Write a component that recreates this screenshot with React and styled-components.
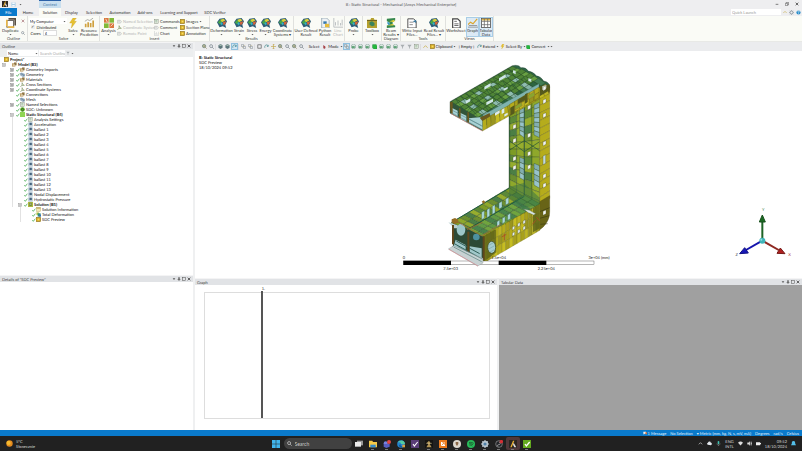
import React from "react";
import styled, { createGlobalStyle } from "styled-components";

const GlobalStyle = createGlobalStyle`
  * {
    box-sizing: border-box;
  }
  body {
    margin: 0;
    font-family: Lato, "Liberation Sans", Arial, sans-serif;
    font-size: 4px;
    line-height: 5px;
    color: #222;
    text-rendering: geometricPrecision;
  }
  button, input, select {
    font: inherit;
    color: inherit;
    margin: 0;
    padding: 0;
    border: none;
    background: transparent;
  }
  svg {
    display: block;
    flex: none;
  }
`;

const App = styled.div`
  display: flex;
  flex-direction: column;
  height: 100vh;
  overflow: hidden;
  background: #fff;
  white-space: nowrap;
`;

// title and tabs
const Header = styled.header`
  background: #eeeef0;
`;
const TitleBar = styled.div`
  display: grid;
  grid-template-columns: 1fr auto 1fr;
  align-items: center;
  height: 8px;
`;
const QuickAccess = styled.div`
  display: flex;
  align-items: center;
  height: 8px;
  gap: 3px;
  padding-left: 2px;
`;
const ContextTab = styled.span`
  width: 22px;
  height: 8px;
  margin-left: 14px;
  padding-top: 1px;
  border-top: 1px solid #2b62a8;
  background: #c9dfef;
  color: #4a7ba8;
  text-align: center;
`;
const Title = styled.span`
  color: #555;
`;
const WindowButtons = styled.div`
  display: flex;
  justify-content: flex-end;
  gap: 6px;
  padding-right: 3px;
`;
const TabRow = styled.div`
  display: flex;
  align-items: center;
  height: 8px;
`;
const Tab = styled.button`
  width: ${(p) => p.$w}px;
  height: 8px;
  text-align: center;
  background: ${(p) => (p.$file ? "#0a7acb" : p.$active ? "#fafbf6" : "transparent")};
  color: ${(p) => (p.$file ? "#fff" : "#333")};
`;
const LaunchBox = styled.input`
  width: 50px;
  height: 6px;
  margin-left: auto;
  margin-right: 2px;
  padding-left: 1px;
  background: #fff;
  &::placeholder {
    color: #999;
  }
`;
const HelpIcons = styled.div`
  display: flex;
  gap: 2px;
  padding-right: 1px;
`;

// ribbon
const Ribbon = styled.div`
  display: flex;
  height: 26px;
  background: #fafbf6;
  border-bottom: 1px solid #e8e9e6;
`;
const Group = styled.section`
  display: flex;
  flex-direction: column;
  width: ${(p) => p.$w}px;
  padding-top: 1px;
  border-right: 1px solid #e0e1de;
`;
const GroupBody = styled.div`
  display: flex;
  flex: none;
  justify-content: center;
  height: 19px;
`;
const GroupName = styled.div`
  height: 5px;
  text-align: center;
  color: #444;
`;
const ToolButton = styled.button`
  display: flex;
  flex-direction: column;
  align-items: center;
  flex: none;
  width: ${(p) => p.$w}px;
  height: 20px;
  padding-top: 1px;
  line-height: 4px;
  color: ${(p) => (p.$dim ? "#b5b5b5" : "#333")};
  background: ${(p) => (p.$active ? "#dceaf5" : "transparent")};
  outline: ${(p) => (p.$active ? "1px solid #a9cde6" : "none")};
  outline-offset: -1px;
  svg {
    margin-bottom: 1px;
  }
`;
const Stack = styled.div`
  display: flex;
  flex-direction: column;
  width: ${(p) => p.$w}px;
  padding-top: 1px;
`;
const SmallTool = styled.button`
  display: flex;
  align-items: center;
  gap: 1px;
  height: 6px;
  color: ${(p) => (p.$dim ? "#b5b5b5" : "#333")};
`;
const Line = styled.label`
  display: flex;
  align-items: center;
  gap: 2px;
  height: 6px;
  padding-left: 2px;
`;
const Picker = styled.select`
  width: ${(p) => p.$w}px;
  height: 6px;
  padding-left: 1px;
  appearance: none;
  background: #fff;
`;
const PickerWrap = styled.span`
  display: flex;
  align-items: center;
  background: #fff;
`;
const Tick = styled.input`
  appearance: none;
  width: 4px;
  height: 4px;
  background: #eee;
  &:checked::before {
    content: "✓";
    display: block;
    line-height: 4px;
  }
`;
const CoresBox = styled.input`
  width: 14px;
  height: 6px;
  padding-left: 1px;
  border: 1px solid #ddd;
  background: #fff;
`;

// work area
const Work = styled.main`
  display: grid;
  grid-template-columns: 193px 1fr;
  gap: 2px;
  flex: 1;
  min-height: 0;
  background: #eff0f1;
`;
const Column = styled.div`
  display: flex;
  flex-direction: column;
  min-width: 0;
  min-height: 0;
`;
const Panel = styled.section`
  display: flex;
  flex-direction: column;
  flex: ${(p) => (p.$h ? "none" : "1")};
  height: ${(p) => (p.$h ? p.$h + "px" : "auto")};
  min-height: 0;
  min-width: 0;
  background: ${(p) => p.$bg || "#fff"};
`;
const PanelHead = styled.div`
  display: flex;
  align-items: center;
  flex: none;
  height: 7px;
  padding: 0 2px;
  gap: 1px;
  border-top: 1px solid #f4f4f5;
  background: #e1e3e6;
  color: #444;
`;
const Spacer = styled.span`
  flex: 1;
`;
const SearchRow = styled.div`
  display: flex;
  align-items: center;
  flex: none;
  height: 8px;
  padding-left: 7px;
  gap: 1px;
  background: #eceeef;
`;
const OutlineSearch = styled.input`
  width: 26px;
  height: 6px;
  padding-left: 1px;
  background: #fff;
  &::placeholder {
    color: #aaa;
  }
`;

// outline tree
const Tree = styled.ul`
  margin: 0;
  padding: 0 0 0 1px;
  list-style: none;
`;
const TreeRow = styled.li`
  display: flex;
  align-items: center;
  height: 5px;
  color: #111;
  font-weight: ${(p) => (p.$bold ? 700 : 400)};
`;
const Guide = styled.span`
  width: 5px;
  height: 5px;
  margin-left: 3px;
  border-left: 1px solid ${(p) => (p.$on ? "#e2e2e2" : "transparent")};
`;
const Branch = styled.span`
  display: flex;
  align-items: center;
  justify-content: space-between;
  width: ${(p) => (p.$root ? 3 : 11)}px;
  height: 5px;
  padding-left: 1px;
`;
const NodeName = styled.span`
  margin-left: 1px;
`;

// graphics toolbar
const Toolbar = styled.div`
  display: flex;
  align-items: center;
  flex: none;
  height: 9px;
  padding-left: 6px;
  background: #ebecee;
`;
const ToolIcon = styled.button`
  display: flex;
  align-items: center;
  justify-content: center;
  flex: none;
  width: 7px;
  height: 7px;
  background: ${(p) => (p.$active ? "#cfe4f2" : "transparent")};
  outline: ${(p) => (p.$active ? "1px solid #8fc0de" : "none")};
  outline-offset: -1px;
`;
const Gap = styled.span`
  width: 2px;
  height: 6px;
  border-left: 1px solid #dcdddf;
`;
const ToolText = styled.button`
  display: flex;
  align-items: center;
  justify-content: center;
  gap: 1px;
  flex: none;
  width: ${(p) => p.$w}px;
`;

// viewport
const View = styled.div`
  position: relative;
  display: flex;
  align-items: center;
  justify-content: center;
  flex: 1;
  min-height: 0;
  background: #fff;
`;
const Caption = styled.div`
  position: absolute;
  left: 4px;
  top: 4px;
  line-height: 5px;
  color: #111;
`;
const TriadWrap = styled.div`
  position: absolute;
  right: 0;
  bottom: 0;
`;
const Bottom = styled.div`
  display: grid;
  grid-template-columns: 302px 1fr;
  gap: 2px;
  flex: none;
  height: 152px;
`;
const Plot = styled.div`
  position: relative;
  flex: 1;
  margin: 7px 7px 11px 9px;
  border: 1px solid #ddd;
`;
const TimeMark = styled.div`
  position: absolute;
  left: 20%;
  top: -7px;
  bottom: 0;
  &::after {
    content: "";
    position: absolute;
    left: -1px;
    top: 5px;
    bottom: 0;
    width: 2px;
    background: #555;
  }
`;
const MarkName = styled.span`
  display: block;
`;

// bottom bars
const StatusBar = styled.footer`
  display: flex;
  align-items: center;
  justify-content: flex-end;
  flex: none;
  height: 6px;
  padding-right: 3px;
  gap: 4px;
  color: #e3f2fc;
  background: #0a7acb;
`;
const StatusItem = styled.span`
  display: flex;
  align-items: center;
  gap: 1px;
`;
const Taskbar = styled.nav`
  display: grid;
  grid-template-columns: 1fr auto 1fr;
  align-items: center;
  flex: none;
  height: 15px;
  color: #ddd;
  background: #212121;
`;
const Weather = styled.div`
  display: flex;
  align-items: center;
  gap: 3px;
  padding-left: 6px;
`;
const Dock = styled.div`
  display: flex;
  align-items: center;
`;
const DockButton = styled.button`
  display: flex;
  align-items: center;
  justify-content: center;
  width: 14px;
  height: 13px;
  border-radius: 2px;
  background: ${(p) => (p.$active ? "#50383a" : "transparent")};
`;
const DockMark = styled.span`
  display: flex;
  flex-direction: column;
  align-items: center;
  gap: 1px;
  padding-top: 2px;
  &::after {
    content: "";
    width: 3px;
    height: 1px;
    background: ${(p) => (p.$open ? "#777" : "transparent")};
  }
`;
const DockSearch = styled.label`
  display: flex;
  align-items: center;
  gap: 3px;
  width: 68px;
  height: 11px;
  margin-left: 1px;
  padding-left: 3px;
  border-radius: 6px;
  background: #414141;
`;
const DockInput = styled.input`
  width: 50px;
  font-size: 5px;
  &::placeholder {
    color: #ccc;
  }
`;
const Tray = styled.div`
  display: flex;
  align-items: center;
  justify-content: flex-end;
  gap: 4px;
  padding-right: 6px;
`;
const TwoLines = styled.div`
  line-height: 5px;
  text-align: ${(p) => p.$align || "left"};
`;

const shapes = {
  ansys: (
    <>
      <rect width="12" height="12" fill="#2b2622" />
      <path d="M2 11L6 1h2L4 11z" fill="#f2b632" />
      <path d="M7 4l4 7H8L6 7z" fill="#ddd" />
    </>
  ),
  save: (
    <>
      <rect x="1" y="1" width="10" height="10" fill="#a9cce5" />
      <path d="M3 1h6v4H3zM3 7h6v4H3z" fill="#f5fafd" />
    </>
  ),
  minus: <path d="M2 7h8" stroke="#444" strokeWidth="2" />,
  restore: <path d="M4 4V1h7v7H8M1 4h7v7H1z" fill="none" stroke="#444" strokeWidth="1.5" />,
  cross: <path d="M2 2l8 8M10 2l-8 8" stroke="#444" strokeWidth="2.4" />,
  redCross: <path d="M2 2l8 8M10 2l-8 8" stroke="#a46a70" strokeWidth="2" />,
  square: <rect x="2" y="2" width="8" height="8" fill="none" stroke="#555" strokeWidth="1.6" />,
  pin: <path d="M4 1h4v5h2v2H7v4H5V8H2V6h2z" fill="#555" />,
  down: <path d="M2 4h8l-4 5z" fill="#555" />,
  up: <path d="M2 8l4-4 4 4" fill="none" stroke="#ddd" strokeWidth="1.6" />,
  caret: <path d="M1 9l5-5 5 5" fill="none" stroke="#cbb355" strokeWidth="2" />,
  gear: (
    <>
      <circle cx="6" cy="6" r="3.6" fill="none" stroke="#8e99a0" strokeWidth="2.4" />
      <path d="M6 0v2M6 10v2M0 6h2M10 6h2M2 2l1 1M9 9l1 1M10 2L9 3M2 10l1-1" stroke="#8e99a0" strokeWidth="1.6" />
    </>
  ),
  settings: (
    <>
      <circle cx="6" cy="6" r="3.6" fill="#4f7fa6" stroke="#b7c4cd" strokeWidth="2.4" />
      <path d="M6 0v2M6 10v2M0 6h2M10 6h2M2 2l1 1M9 9l1 1M10 2L9 3M2 10l1-1" stroke="#b7c4cd" strokeWidth="1.6" />
    </>
  ),
  help: (
    <>
      <circle cx="6" cy="6" r="5" fill="#258bc9" />
      <path d="M4 5c0-3 4-3 4-1 0 1-2 1-2 3M6 8v2" fill="none" stroke="#fff" strokeWidth="1.3" />
    </>
  ),
  duplicate: (
    <>
      <path d="M3 0h9v9h-2V2H3z" fill="#594f42" />
      <rect x="1" y="3" width="8" height="8" fill="#fff" stroke="#55504a" strokeWidth="1" />
      <path d="M0 2v10h2V2zM0 10h10v2H0z" fill="#e8b647" />
    </>
  ),
  zoom: (
    <>
      <circle cx="5" cy="5" r="3.4" fill="#f4f8f8" stroke="#68737b" strokeWidth="1.6" />
      <path d="M8 8l3 3" stroke="#68737b" strokeWidth="2" />
    </>
  ),
  search: (
    <>
      <circle cx="5" cy="5" r="3.6" fill="none" stroke="#ddd" strokeWidth="1.6" />
      <path d="M8 8l3 3" stroke="#ddd" strokeWidth="1.8" />
    </>
  ),
  zoomIn: (
    <>
      <circle cx="5" cy="5" r="4" fill="#dcebd6" stroke="#5d7360" strokeWidth="1.6" />
      <path d="M3 5h4M5 3v4M8 8l3 3" stroke="#78643a" strokeWidth="1.5" />
    </>
  ),
  bolt: <path d="M6 0h4L7 4h3L4 12l1-6H2z" fill="#e7c232" stroke="#c29c1f" strokeWidth=".4" />,
  bars: (
    <>
      <path d="M1 11V7h2v4zM4 11V5h2v6zM7 11V6h2v5zM10 11V3h2v8z" fill="#d0a13f" />
      <path d="M1 4l3-2 3 1 4-3" fill="none" stroke="#8b8b87" strokeWidth=".8" />
    </>
  ),
  analysis: (
    <>
      <path d="M0 0h6v6H0zM6 6h6v6H6z" fill="#d97840" />
      <path d="M6 0h6v6H6zM0 6h6v6H0z" fill="#82b93a" />
      <path d="M2 1l2 4M8 10l3-3M0 6h12M6 0v12" stroke="#fff" strokeWidth=".8" />
    </>
  ),
  mesh: (
    <>
      <path d="M0 5l3-4 6-1 3 4-2 4 1 4-4-2-4 1z" fill="#2d5d79" />
      <path d="M1 5l3-3 2 2-2 4z" fill="#47a647" />
      <path d="M4 2l4-1 2 2-4 2z" fill="#dcd039" />
      <path d="M7 5l4-1-1 3-2 2z" fill="#d66237" />
      <path d="M5 5l2 1-1 3-2-2z" fill="#34b1c4" />
    </>
  ),
  python: (
    <>
      <path d="M2 0h6l3 3v9H2z" fill="#eef2f5" stroke="#8195a3" strokeWidth=".8" />
      <path d="M4 4h4v3H4z" fill="#3879ae" />
      <path d="M6 7h5v4H6z" fill="#e8bd3c" />
    </>
  ),
  chart: <path d="M1 0v11h11M3 9V5M6 9V3M9 9V6M11 9V2" fill="none" stroke="#b9bdc0" strokeWidth="1.1" />,
  toolbox: (
    <>
      <path d="M0 2h4l1-2h3l1 2h3v10H0z" fill="#b5a02f" />
      <path d="M3 5l3-1 3 2v3l-3 1-3-2z" fill="#39845e" />
      <path d="M0 3h12" stroke="#64591c" strokeWidth="1" />
    </>
  ),
  beam: (
    <>
      <path d="M1 1l10-1v3L8 4v4l3 1v2L1 12V9l3-1V5L1 4z" fill="#34864d" />
      <path d="M4 4l6-2v3zM1 9l8-2v2z" fill="#ddcd38" />
      <path d="M2 5l2 3" stroke="#3497c4" strokeWidth="2" />
    </>
  ),
  file: (
    <>
      <path d="M1 1h7l3 3v8H1z" fill="#fff" stroke="#555" strokeWidth="1.2" />
      <path d="M3 5h5M3 8h4" stroke="#777" />
      <path d="M7 4l4-2v4z" fill="#3b799e" />
    </>
  ),
  sheet: (
    <>
      <path d="M2 1h6l3 3v8H2z" fill="#fff" stroke="#444" strokeWidth="1.4" />
      <path d="M4 4h3M4 7h5M4 9h5" stroke="#555" />
    </>
  ),
  info: (
    <>
      <rect x="1" y="1" width="10" height="10" fill="#f1e9b8" stroke="#b7a660" />
      <path d="M1 1h10v3H1z" fill="#c4a95a" />
    </>
  ),
  graph: (
    <>
      <path d="M0 8l3-3 3 2 5-6" fill="none" stroke="#dca52c" strokeWidth="1.4" />
      <path d="M0 11h12M1 9h10" stroke="#777" strokeWidth=".8" />
    </>
  ),
  table: (
    <>
      <rect x="0.5" y="0.5" width="11" height="11" fill="#fff" stroke="#555" />
      <path d="M1 1h10v2H1z" fill="#e1b545" />
      <path d="M1 4h10M1 8h10M4 1v10M8 1v10" stroke="#666" strokeWidth=".9" />
    </>
  ),
  tag: (
    <>
      <path d="M1 3h7l3 3-3 4H1z" fill="#e8ebe9" stroke="#a5aaa7" strokeWidth="1" />
      <path d="M3 5h4" stroke="#aaa" />
    </>
  ),
  doc: (
    <>
      <rect x="1" y="1" width="9" height="10" fill="#edf1e9" stroke="#75806f" strokeWidth="1" />
      <path d="M3 4h5M3 7h5" stroke="#5d9367" strokeWidth="1.2" />
    </>
  ),
  gold: (
    <>
      <rect x="0" y="1" width="11" height="10" fill="#d8ae29" stroke="#8b701f" strokeWidth="1.5" />
      <path d="M4 4h4v4H4z" fill="#f5dd66" />
    </>
  ),
  cube: (
    <>
      <path d="M6 0l5 3v6l-5 3-5-3V3z" fill="#5e777c" />
      <path d="M6 1l4 2-4 2-4-2z" fill="#abc5b5" />
    </>
  ),
  greenCube: (
    <>
      <path d="M6 0l5 3v6l-5 3-5-3V3z" fill="#dce8e3" stroke="#587f70" />
      <path d="M2 5h7v5H2z" fill="#5fa276" />
    </>
  ),
  brightCube: <path d="M2 1h8l2 3v8H4L1 9V2z" fill="#24b73d" stroke="#307847" strokeWidth=".8" />,
  link: (
    <>
      <path d="M1 1h5v5H1zM6 6h5v5H6z" fill="none" stroke="#8a9299" strokeWidth="1.4" />
      <path d="M6 4l4-1M3 7l2 3" stroke="#a79b63" />
    </>
  ),
  rotate: <path d="M2 9c-2-6 6-10 8-4M10 2v4H7" fill="none" stroke="#4d8e92" strokeWidth="1.8" />,
  move: <path d="M6 0v12M0 6h12M4 2l2-2 2 2M4 10l2 2 2-2" fill="none" stroke="#c1a74e" strokeWidth="1.6" />,
  arrow: <path d="M1 0l8 7-4 1 2 4-2 0-2-3-2 2z" fill="#a0353b" />,
  filter: <path d="M1 2h10L7 7v4H5V7z" fill="#a8adb0" />,
  check: <path d="M1 6l3 4 6-8" fill="none" stroke="#4cae55" strokeWidth="2.4" />,
  plus: (
    <>
      <rect x="1" y="1" width="10" height="10" fill="#eee" stroke="#888" strokeWidth="1.5" />
      <path d="M3 6h6M6 3v6" stroke="#555" strokeWidth="1.5" />
    </>
  ),
  less: (
    <>
      <rect x="1" y="1" width="10" height="10" fill="#eee" stroke="#999" strokeWidth="1.5" />
      <path d="M3 6h6" stroke="#555" strokeWidth="1.5" />
    </>
  ),
  load: (
    <>
      <rect x="1" y="1" width="10" height="10" fill="#9eb4c4" />
      <path d="M4 2h5v6H4z" fill="#45637d" />
      <path d="M2 9h8" stroke="#dce6ed" strokeWidth="2" />
    </>
  ),
  geo: (
    <>
      <path d="M0 3l4-2 8 4v5l-5 2-7-4z" fill="#9eb2c5" />
      <path d="M2 4l7 3v3" fill="none" stroke="#56758e" strokeWidth="1.5" />
    </>
  ),
  axis: <path d="M5 1v7h6M5 8l-4 3M5 3L9 7" fill="none" stroke="#859767" strokeWidth="1.8" />,
  mat: (
    <>
      <path d="M0 3h8v8H0z" fill="#be9d64" />
      <path d="M5 1h6v7H5z" fill="#8e7545" />
      <path d="M2 6h5v3H2z" fill="#e6dabd" />
    </>
  ),
  sdc: (
    <>
      <circle cx="6" cy="6" r="5.5" fill="#5aac25" />
      <path d="M3 7c1-5 6-3 6-1M4 8c3 3 5 0 5-2" fill="none" stroke="#294f25" strokeWidth="1.5" />
    </>
  ),
  staticS: <rect width="12" height="12" fill="#8fd453" />,
  deform: (
    <>
      <path d="M1 1h6v6H1z" fill="#b9c440" />
      <path d="M4 3h7v8H4z" fill="#2f947d" />
      <path d="M7 6h5v5H7z" fill="#3c72b5" />
    </>
  ),
  solution: (
    <>
      <rect width="12" height="12" fill="#aeb83f" />
      <path d="M3 2h6v7H3z" fill="#5e7b38" />
      <path d="M4 4h4v2H4z" fill="#f2eebc" />
    </>
  ),
  message: (
    <>
      <path d="M1 2h8v6H5l-3 3V8H1z" fill="#f2f2f2" />
      <path d="M7 4h5v6H7z" fill="#e0733a" />
    </>
  ),
  sun: (
    <>
      <circle cx="6" cy="6" r="5.5" fill="#e48b20" />
      <circle cx="4.5" cy="5" r="3.6" fill="#f5b92e" />
    </>
  ),
  windows: <path d="M0 0h5.6v5.6H0zM6.4 0H12v5.6H6.4zM0 6.4h5.6V12H0zM6.4 6.4H12V12H6.4z" fill="#41b5ec" />,
  taskview: (
    <>
      <rect x="3" y="1" width="9" height="7" fill="#999" />
      <rect x="0" y="3" width="9" height="7" fill="#e9e9e9" />
    </>
  ),
  explorer: (
    <>
      <path d="M0 1h5l1 2h6v8H0z" fill="#f6ca47" />
      <path d="M2 7h8v4H2z" fill="#348bcd" />
    </>
  ),
  teams: (
    <>
      <circle cx="4" cy="5" r="3" fill="#7781df" />
      <path d="M1 6h9v4l-5 2-4-2z" fill="#575fc2" />
      <circle cx="9" cy="3" r="3" fill="#e24747" />
    </>
  ),
  edge: (
    <>
      <circle cx="6" cy="6" r="5.7" fill="#2384cf" />
      <path d="M1 4c3-5 11-4 11 2H6c0-3-3-3-5-2z" fill="#54cda2" />
      <path d="M5 6c0 4 4 5 6 3-2 4-8 3-8-1z" fill="#175893" />
      <rect x="8" y="7" width="4" height="4" fill="#d8a242" />
    </>
  ),
  purple: (
    <>
      <rect width="12" height="12" fill="#5a3d77" />
      <path d="M3 6l2 3 5-6" fill="none" stroke="#fff" strokeWidth="1.6" />
    </>
  ),
  dark: (
    <>
      <rect width="12" height="12" fill="#151412" />
      <path d="M6 1l2 3-1 2 3 5H2l3-5-2-2z" fill="#b29455" />
      <path d="M2 5h8" stroke="#e0cb94" />
    </>
  ),
  orange: (
    <>
      <rect width="12" height="12" fill="#ec7c1f" />
      <rect x="3" y="3" width="6" height="6" fill="#fff" />
      <path d="M4 8l4-4M5 4h3v3" fill="none" stroke="#ec7c1f" strokeWidth="1.2" />
    </>
  ),
  round: (
    <>
      <circle cx="6" cy="6" r="6" fill="#ddd8cf" />
      <path d="M4 3h4v3L6 9 4 6z" fill="#8a6848" />
    </>
  ),
  spotify: (
    <>
      <circle cx="6" cy="6" r="6" fill="#27ba59" />
      <path d="M3 4c3-1 5 0 7 1M3 6c3-1 4 0 6 1M4 8c2-1 3 0 4 1" fill="none" stroke="#183821" strokeWidth="1" />
    </>
  ),
  obs: (
    <>
      <circle cx="6" cy="6" r="5" fill="#24262a" stroke="#999" />
      <path d="M6 3c3 1 2 4 0 4-3 0-3 2-1 3" fill="none" stroke="#bbb" />
      <circle cx="9.5" cy="2.5" r="2.6" fill="#d72f35" />
    </>
  ),
  greenCheck: (
    <>
      <rect width="12" height="12" fill="#63a91f" />
      <path d="M3 6l2 3 5-6" fill="none" stroke="#fff" strokeWidth="2" />
    </>
  ),
  cloud: <path d="M2 9a3 3 0 010-5c2-4 7-3 7 0 4 0 3 6 0 6z" fill="#e3e8ed" />,
  mic: (
    <>
      <rect x="4" y="0" width="4" height="8" rx="2" fill="#41c0b0" />
      <path d="M2 6c0 5 8 5 8 0M6 9v3" fill="none" stroke="#aaa" />
    </>
  ),
  wifi: <path d="M0 4c4-4 8-4 12 0L6 11z" fill="#ddd" />,
  speaker: <path d="M1 4h3l3-3v10L4 8H1zM9 3c2 2 2 4 0 6M11 1c2 3 2 7 0 10" fill="#ddd" stroke="#ddd" strokeWidth=".7" />,
  battery: <path d="M0 3h10v2h2v3h-2v2H0z" fill="#eee" />,
  bell: <path d="M6 0c4 0 4 3 4 6l2 4H0l2-4c0-3 0-6 4-6z" fill="#54bfe9" />,
};

const Icon = ({ name, size = 5 }) => (
  <svg width={size} height={size} viewBox="0 0 12 12" aria-hidden="true">
    {shapes[name]}
  </svg>
);

const Tool = ({ icon, w, lines, dim, active, arrow }) => (
  <ToolButton $w={w} $dim={dim} $active={active}>
    <Icon name={icon} size={10} />
    {lines.map((l) => (
      <span key={l}>{l}</span>
    ))}
    {arrow && <Icon name="down" size={3} />}
  </ToolButton>
);

const tabs = [
  ["File", 17], ["Home", 22], ["Solution", 22], ["Display", 21], ["Selection", 24],
  ["Automation", 28], ["Add-ons", 22], ["Learning and Support", 46], ["SDC Verifier", 26],
];

const RibbonBar = () => (
  <Ribbon>
    <Group $w={28}>
      <GroupBody>
        <Tool icon="duplicate" w={20} lines={["Duplicate"]} arrow />
        <Stack $w={6}>
          <SmallTool aria-label="Delete"><Icon name="redCross" size={4} /></SmallTool>
          <SmallTool />
          <SmallTool aria-label="Find"><Icon name="zoom" size={4} /></SmallTool>
        </Stack>
      </GroupBody>
      <GroupName>Outline</GroupName>
    </Group>
    <Group $w={72}>
      <GroupBody>
        <Stack $w={38}>
          <PickerWrap>
            <Picker $w={34} aria-label="Solve on" defaultValue="My Computer">
              <option>My Computer</option>
            </Picker>
            <Icon name="down" size={3} />
          </PickerWrap>
          <Line><Tick type="checkbox" defaultChecked />Distributed</Line>
          <Line>Cores <CoresBox defaultValue="4" /></Line>
        </Stack>
        <Tool icon="bolt" w={13} lines={["Solve"]} arrow />
        <Tool icon="bars" w={19} lines={["Resource", "Prediction"]} />
      </GroupBody>
      <GroupName>Solve</GroupName>
    </Group>
    <Group $w={110}>
      <GroupBody>
        <Tool icon="analysis" w={17} lines={["Analysis"]} arrow />
        <Stack $w={37}>
          <SmallTool $dim><Icon name="tag" />Named Selection</SmallTool>
          <SmallTool $dim><Icon name="axis" />Coordinate System</SmallTool>
          <SmallTool $dim><Icon name="tag" />Remote Point</SmallTool>
        </Stack>
        <Stack $w={26}>
          <SmallTool><Icon name="doc" />Commands</SmallTool>
          <SmallTool><Icon name="tag" />Comment</SmallTool>
          <SmallTool><Icon name="chart" />Chart</SmallTool>
        </Stack>
        <Stack $w={29}>
          <SmallTool><Icon name="gold" />Images<Icon name="down" size={3} /></SmallTool>
          <SmallTool><Icon name="gold" />Section Plane</SmallTool>
          <SmallTool><Icon name="gold" />Annotation</SmallTool>
        </Stack>
      </GroupBody>
      <GroupName>Insert</GroupName>
    </Group>
    <Group $w={84}>
      <GroupBody>
        <Tool icon="mesh" w={22} lines={["Deformation"]} arrow />
        <Tool icon="mesh" w={13} lines={["Strain"]} arrow />
        <Tool icon="mesh" w={13} lines={["Stress"]} arrow />
        <Tool icon="mesh" w={14} lines={["Energy"]} arrow />
        <Tool icon="mesh" w={20} lines={["Coordinate", "Systems ▾"]} />
      </GroupBody>
      <GroupName>Results</GroupName>
    </Group>
    <Group $w={51}>
      <GroupBody>
        <Tool icon="mesh" w={24} lines={["User Defined", "Result"]} />
        <Tool icon="python" w={14} lines={["Python", "Result"]} />
        <Tool icon="chart" w={12} lines={["Line", "Chart"]} dim />
      </GroupBody>
    </Group>
    <Group $w={18}>
      <GroupBody><Tool icon="mesh" w={17} lines={["Probe"]} arrow /></GroupBody>
    </Group>
    <Group $w={19}>
      <GroupBody><Tool icon="toolbox" w={18} lines={["Toolbox"]} arrow /></GroupBody>
    </Group>
    <Group $w={19}>
      <GroupBody><Tool icon="beam" w={18} lines={["Beam", "Results ▾"]} /></GroupBody>
      <GroupName>Diagram</GroupName>
    </Group>
    <Group $w={45}>
      <GroupBody>
        <Tool icon="file" w={22} lines={["Write Input", "Files..."]} />
        <Tool icon="mesh" w={22} lines={["Read Result", "Files... ▾"]} />
      </GroupBody>
      <GroupName>Tools</GroupName>
    </Group>
    <Group $w={48}>
      <GroupBody>
        <Tool icon="sheet" w={20} lines={["Worksheet"]} />
        <Tool icon="graph" w={13} lines={["Graph"]} active />
        <Tool icon="table" w={14} lines={["Tabular", "Data"]} active />
      </GroupBody>
      <GroupName>Views</GroupName>
    </Group>
  </Ribbon>
);

// level, icon, name, expander, bold
const nodes = [
  [0, "gold", "Project*", "", true],
  [1, "mat", "Model (B3)", "-", true],
  [2, "mat", "Geometry Imports", "+"],
  [2, "geo", "Geometry", "+"],
  [2, "mat", "Materials", "+"],
  [2, "axis", "Cross Sections", "+"],
  [2, "axis", "Coordinate Systems", "+"],
  [2, "mat", "Connections", ""],
  [2, "geo", "Mesh", ""],
  [2, "doc", "Named Selections", "+"],
  [2, "sdc", "SDC: Unknown", ""],
  [2, "staticS", "Static Structural (B4)", "-", true],
  [3, "doc", "Analysis Settings", ""],
  [3, "load", "Acceleration", ""],
  ...Array.from({ length: 13 }, (_, i) => [3, "load", `ballast ${i + 1}`, ""]),
  [3, "load", "Nodal Displacement", ""],
  [3, "load", "Hydrostatic Pressure", ""],
  [3, "solution", "Solution (B5)", "-", true],
  [4, "info", "Solution Information", ""],
  [4, "deform", "Total Deformation", ""],
  [4, "gold", "SDC Preview", ""],
];

const OutlineTree = () => (
  <Tree>
    {nodes.map(([level, icon, name, state, bold], i) => (
      <TreeRow key={i} $bold={bold}>
        {Array.from({ length: Math.max(level - 1, 0) }, (_, g) => (
          <Guide key={g} $on={g === level - 2 && g > 0} />
        ))}
        <Branch $root={level === 0}>
          {level > 0 && (state ? <Icon name={state === "+" ? "plus" : "less"} size={4} /> : <span />)}
          {level > 1 && <Icon name="check" size={4} />}
        </Branch>
        <Icon name={icon} size={5} />
        <NodeName>{name}</NodeName>
      </TreeRow>
    ))}
  </Tree>
);

const Head = ({ children }) => (
  <PanelHead>
    {children}
    <Spacer />
    <Icon name="down" size={4} />
    <Icon name="pin" size={4} />
    <Icon name="square" size={4} />
    <Icon name="cross" size={4} />
  </PanelHead>
);

const greens = ["#7d9b25", "#8fa82b", "#6c8f30", "#4c7f45", "#96ad2e", "#5c8a36"];
const deck = ["#4f8436", "#7fae35", "#2f6a46", "#94b93d", "#3b7848", "#68a043", "#8fbcae"];
const yellows = ["#b5ac1c", "#c6bd22", "#a8a01c", "#bdb525", "#99951f"];
const glass = ["#83aeb0", "#98c3ca"];

// splits the quad a-b-c-d into cells and tints them from a palette
const Cells = ({ quad, nu, nv, palette, line = "#24401f" }) => {
  const [a, b, c, d] = quad;
  const at = (s, t) =>
    [0, 1].map((k) => (1 - t) * ((1 - s) * a[k] + s * b[k]) + t * ((1 - s) * d[k] + s * c[k]));
  const cells = [];
  for (let i = 0; i < nu; i++) {
    for (let j = 0; j < nv; j++) {
      const pts = [
        at(i / nu, j / nv),
        at((i + 1) / nu, j / nv),
        at((i + 1) / nu, (j + 1) / nv),
        at(i / nu, (j + 1) / nv),
      ];
      cells.push(
        <polygon
          key={`${i}-${j}`}
          points={pts.map((p) => p.map((n) => n.toFixed(1)).join(",")).join(" ")}
          fill={palette[(i * 7 + j * 5 + ((i * j) % 3)) % palette.length]}
        />
      );
    }
  }
  return <g stroke={line} strokeWidth="1">{cells}</g>;
};

const holes = [
  [352, 208], [352, 250], [352, 304], [352, 331], [396, 234], [396, 289], [396, 329], [396, 150],
  [442, 93], [442, 132], [442, 174], [442, 258], [442, 356], [442, 384], [442, 466],
];

const Model = () => (
  <svg width="240" height="220" viewBox="-50 0 720 660" role="img" aria-label="Hull section">
    {/* column */}
    <Cells quad={[[340, 172], [386, 148], [386, 440], [340, 410]]} nu={2} nv={13} palette={greens} />
    <Cells quad={[[386, 148], [432, 122], [432, 465], [386, 440]]} nu={2} nv={13} palette={greens} />
    <Cells quad={[[372, 164], [386, 156], [386, 248], [372, 238]]} nu={1} nv={6} palette={glass} />
    <Cells quad={[[415, 150], [432, 142], [432, 248], [415, 240]]} nu={1} nv={7} palette={glass} />
    <Cells quad={[[372, 306], [386, 312], [386, 376], [372, 368]]} nu={1} nv={4} palette={glass} />
    <Cells quad={[[415, 325], [432, 332], [432, 400], [415, 390]]} nu={1} nv={4} palette={glass} />
    <path d="M342 285l44-28 46 30M342 258l44 32 46-30M342 175v232M386 150v286" stroke="#1f4f36" strokeWidth="2" fill="none" />
    <Cells quad={[[432, 105], [462, 92], [462, 430], [432, 450]]} nu={1} nv={15} palette={yellows} line="#5d5b16" />
    <path d="M432 112l30-20v20l-30 18z" fill="#4e4c18" />
    <path d="M432 440l30-18v48c0 24-12 42-32 56z" fill="#686417" stroke="#3d3b10" />
    <path d="M432 470l30-12M432 490l29-8M434 508l22-2" stroke="#2f300f" strokeWidth="1.5" />

    {/* upper slab */}
    <path d="M163 140l187-108q18-4 26 6 14-2 22 10 14 2 24 14 14 2 22 16 18 2 18 20l-200 118-99-42z" fill="#2f6546" stroke="#1f3826" />
    <Cells quad={[[166, 140], [350, 34], [378, 46], [194, 156]]} nu={13} nv={2} palette={deck} />
    <Cells quad={[[194, 156], [378, 42], [404, 58], [220, 172]]} nu={13} nv={2} palette={deck} />
    <Cells quad={[[220, 172], [404, 54], [428, 72], [246, 188]]} nu={13} nv={2} palette={deck} />
    <Cells quad={[[246, 188], [428, 70], [450, 84], [262, 196]]} nu={13} nv={1} palette={["#417c52", "#84b2a4", "#2d6540"]} />
    <g stroke="#1d4d36" strokeWidth="1.3" fill="none">
      {Array.from({ length: 11 }, (_, i) => (
        <path key={i} d={`M${180 + i * 16} ${132 - i * 9}l30 42 14-16 32 38`} />
      ))}
    </g>
    <path
      d="M310 70l20-12v9l-20 12zM266 95l19-11v9l-19 11zM210 138l14-8v9l-14 8zM272 142l20-11v9l-20 11zM352 46l8 2v10l-8-4zM324 102l12-7v6l-12 7zM398 70l9 2v9l-9-3z"
      fill="#cfe6e6"
    />
    <path d="M262 180l64-36 90-50 14-8v14l-168 98z" fill="#7fb3ae" stroke="#386559" />
    <Cells quad={[[260, 196], [450, 88], [460, 116], [260, 228]]} nu={15} nv={1} palette={yellows} line="#686415" />
    <Cells quad={[[342, 148], [430, 96], [430, 128], [342, 180]]} nu={6} nv={2} palette={yellows} line="#555217" />
    <path d="M344 158l12-7v24l-12 7zM366 134l22-13v14l-22 13zM388 118l8-5v28l-8 5zM432 94l30-6v18l-30 18z" fill="#565a1c" />
    <path d="M358 154l20-12 2 10-22 13zM398 120l18-10 2 12-20 12z" fill="#8aa52e" stroke="#9d5b26" />
    <path d="M298 174l14-8v8l-14 8zM318 164l8-5v14l-8 4zM326 178l10-5v6l-10 6zM440 94l12-4v10l-12 5z" fill="#dcebed" />
    <path d="M163 140l97 55v33l-95-52z" fill="#31553a" />
    <path d="M168 158l18 9v18l-18-10zM190 172l22 10v18l-22-11zM218 190l42-4v38l-42-22z" fill="#a9d2d5" />
    <path d="M166 172l94 52M170 166l90 48M220 192l38 20" stroke="#4c7d80" strokeWidth="1.5" />
    <path d="M163 142l8-2v36l-6-3M190 158l5 3v30l-5-3M215 170l5 3v30l-5-3M252 188l30-14 2 10-24 14z" fill="#6b5a20" />
    <path d="M166 176l94 52" stroke="#db9390" strokeWidth="2" />

    {/* lower slab */}
    <Cells quad={[[166, 504], [340, 398], [386, 426], [214, 526]]} nu={13} nv={2} palette={greens} />
    <Cells quad={[[214, 526], [386, 420], [432, 446], [262, 548]]} nu={13} nv={2} palette={["#70a43f", "#48844c", "#609a45"]} />
    <path d="M168 502l172-102M214 524l172-100M262 546l170-98" stroke="#1f5b42" strokeWidth="3" fill="none" />
    <path d="M340 396l44-12 48 44v22l-50 8-42-30z" fill="#337044" opacity=".5" />
    <path d="M258 472l8-5v22l-8 5zM274 464l8-5v24l-8 5zM290 454l8-5v24l-8 5zM310 444l9-5v18l-9 5zM330 432l9-5v18l-9 5zM304 500l8-5v16l-8 5zM320 490l8-5v16l-8 5zM336 480l8-5v16l-8 5z" fill="#add8dc" stroke="#35614e" />
    <Cells quad={[[262, 542], [432, 448], [432, 526], [262, 625]]} nu={15} nv={3} palette={yellows} line="#777214" />
    <path d="M262 544l40-22v70l-40 30zM412 460l20-12v72l-20 12z" fill="#565e18" opacity=".75" />
    <ellipse cx="288" cy="577" rx="12" ry="18" fill="#a6cdd0" stroke="#35431a" strokeWidth="2" />
    <path d="M281 570l14-8M279 582l18-10M282 592l14-8" stroke="#4f8184" />
    <path d="M350 516l7-4v10l-7 4zM366 506l7-4v10l-7 4zM382 498l7-4v10l-7 4zM350 534l7-4v10l-7 4zM366 526l7-4v10l-7 4zM382 516l7-4v10l-7 4z" fill="#e4eef0" stroke="#4a4814" />
    <path d="M318 546l14-8M326 536v20M422 486l10 12M410 508l10-12" stroke="#ad4a24" strokeWidth="2.4" />
    <path d="M384 462l18 4 18 10-6 4-18-8z" fill="#d8e6e5" stroke="#50613f" />
    <path d="M172 505l46 18 44 22v76l-90-46z" fill="#2c4a36" />
    <path d="M158 502l26 8 14 10-22 0z" fill="#b9cfd0" />
    <ellipse cx="196" cy="524" rx="13" ry="18" fill="#9cc6c8" />
    <ellipse cx="242" cy="546" rx="10" ry="10" fill="#4d91a0" />
    <path d="M180 554l30 16v24l-36-20zM222 574l36 6v30l-36-10z" fill="#a0c8ca" />
    <path d="M176 566l76 42M182 558l70 38M170 574l80 46" stroke="#315f58" strokeWidth="3" />
    <path d="M172 510v58M218 530v66M264 544v72" stroke="#5f461c" strokeWidth="6" />
    <path d="M184 500l74 42 60-36M214 524l46-22" stroke="#b1642b" strokeWidth="2" fill="none" />
    <path d="M168 493l10-4 10 5v9l-11 4-9-5zM258 440l6-4 5 5-5 6z" fill="#936c24" />
    <g fill="#f2f5f4" stroke="#4b5220">
      {holes.map(([x, y]) => (
        <path key={`${x}-${y}`} d={`M${x} ${y + 3}l9-4v11l-9 5z`} />
      ))}
      <path d="M442 303l8-4v26l-8 4z" fill="#c1d9dc" />
    </g>

    {/* scale */}
    <rect x="23" y="618" width="572" height="11" fill="#fff" stroke="#222" />
    <path d="M23 617h143v13H23zM309 617h143v13H309z" fill="#000" />
    <path d="M158 582l16-10 88 38v14l-16 9z" fill="#c7d2d3" stroke="#7b8687" />
    <path d="M174 576l84 44M186 574l74 38" stroke="#557f7c" strokeWidth="2" />
    <path d="M160 583l87 50" stroke="#d58a8e" strokeWidth="2" />
    <g fontSize="12" fill="#222" textAnchor="middle">
      <text x="25" y="612">0</text>
      <text x="309" y="612">1.5e+04</text>
      <text x="610" y="612">3e+04 (mm)</text>
      <text x="165" y="646">7.5e+03</text>
      <text x="452" y="646">2.25e+04</text>
    </g>
  </svg>
);

const Triad = () => (
  <svg width="82" height="82" viewBox="0 0 246 246" role="img" aria-label="Axes">
    <path d="M127 134L176 162" stroke="#8f2922" strokeWidth="6" />
    <path d="M195 173l-14-17-10 16z" fill="#b02020" stroke="#751a17" strokeWidth="3" />
    <path d="M127 134L78 162" stroke="#1515ad" strokeWidth="6" />
    <path d="M59 173l15-18 11 16z" fill="#1818b8" stroke="#111184" strokeWidth="3" />
    <path d="M127 134V76" stroke="#1d6325" strokeWidth="6" />
    <path d="M127 57l-9 21h18z" fill="#1a6a22" stroke="#174f1c" strokeWidth="3" />
    <circle cx="127" cy="134" r="9" fill="#3fb4b8" />
    <circle cx="124" cy="131" r="3" fill="#93dfe0" />
    <g fontSize="12" textAnchor="middle">
      <text x="130" y="44" fill="#3c7d45">Y</text>
      <text x="50" y="180" fill="#334">Z</text>
      <text x="209" y="180" fill="#a33">X</text>
    </g>
  </svg>
);

const IconRun = ({ names, active }) =>
  names.map((n, i) => (
    <ToolIcon key={i} $active={i === active}>
      <Icon name={n} size={5} />
    </ToolIcon>
  ));

const ViewToolbar = () => (
  <Toolbar>
    <IconRun names={["zoomIn", "zoom"]} />
    <Gap />
    <IconRun names={["cube", "cube", "rotate"]} active={2} />
    <Gap />
    <IconRun names={["link", "link"]} />
    <Gap />
    <IconRun names={["square", "rotate", "move", "zoomIn", "zoom", "zoomIn", "zoom"]} />
    <ToolText $w={18}>Select</ToolText>
    <ToolText $w={20}><Icon name="arrow" size={4} />Mode<Icon name="down" size={3} /></ToolText>
    <IconRun names={["link", "greenCube", "greenCube", "greenCube", "brightCube", "greenCube", "greenCube", "greenCube"]} active={0} />
    <IconRun names={["filter", "filter", "doc"]} />
    <Gap />
    <ToolIcon><Icon name="caret" /></ToolIcon>
    <ToolText $w={28}><Icon name="gold" />Clipboard<Icon name="down" size={3} /></ToolText>
    <ToolText $w={19}>[ Empty ]</ToolText>
    <ToolText $w={24}><Icon name="rotate" />Extend<Icon name="down" size={3} /></ToolText>
    <ToolText $w={26}><Icon name="bolt" />Select By<Icon name="down" size={3} /></ToolText>
    <ToolText $w={24}><Icon name="brightCube" size={4} />Convert<Icon name="down" size={3} /></ToolText>
    <Icon name="down" size={3} />
  </Toolbar>
);

const dock = [
  "taskview", "explorer", "teams", "edge", "purple", "dark", "orange",
  "round", "spotify", "settings", "obs", "ansys", "greenCheck",
];

const MechanicalApp = () => {
  return (
    <App>
      <GlobalStyle />
      <Header>
        <TitleBar>
          <QuickAccess>
            <Icon name="ansys" size={6} />
            <Icon name="save" size={5} />
            <Icon name="down" size={3} />
            <ContextTab>Context</ContextTab>
          </QuickAccess>
          <Title>B : Static Structural - Mechanical [Ansys Mechanical Enterprise]</Title>
          <WindowButtons>
            <button aria-label="Minimize"><Icon name="minus" size={4} /></button>
            <button aria-label="Restore"><Icon name="restore" size={4} /></button>
            <button aria-label="Close"><Icon name="cross" size={4} /></button>
          </WindowButtons>
        </TitleBar>
        <TabRow>
          {tabs.map(([name, w]) => (
            <Tab key={name} $w={w} $file={name === "File"} $active={name === "Solution"}>
              {name}
            </Tab>
          ))}
          <LaunchBox aria-label="Quick Launch" placeholder="Quick Launch" />
          <HelpIcons>
            <Icon name="caret" size={4} />
            <Icon name="gear" size={5} />
            <Icon name="help" size={5} />
          </HelpIcons>
        </TabRow>
      </Header>
      <RibbonBar />

      <Work>
        <Column>
          <Panel>
            <Head>Outline</Head>
            <SearchRow>
              <PickerWrap>
                <Picker $w={28} aria-label="Search by" defaultValue="Name">
                  <option>Name</option>
                </Picker>
                <Icon name="down" size={3} />
              </PickerWrap>
              <OutlineSearch aria-label="Search Outline" placeholder="Search Outline" />
              <Icon name="filter" size={4} />
              <Icon name="down" size={3} />
            </SearchRow>
            <OutlineTree />
          </Panel>
          <Panel $h={155}>
            <Head>Details of "SDC Preview"</Head>
          </Panel>
        </Column>

        <Column>
          <ViewToolbar />
          <View>
            <Model />
            <Caption>
              <b>B: Static Structural</b>
              <br />
              SDC Preview
              <br />
              18/10/2024 09:52
            </Caption>
            <TriadWrap>
              <Triad />
            </TriadWrap>
          </View>
          <Bottom>
            <Panel>
              <Head>Graph</Head>
              <Plot>
                <TimeMark>
                  <MarkName>1.</MarkName>
                </TimeMark>
              </Plot>
            </Panel>
            <Panel $bg="#a0a0a0">
              <Head>Tabular Data</Head>
            </Panel>
          </Bottom>
        </Column>
      </Work>

      <StatusBar>
        <StatusItem><Icon name="message" size={4} />1 Message</StatusItem>
        <StatusItem>No Selection</StatusItem>
        <StatusItem>▾ Metric (mm, kg, N, s, mV, mA)</StatusItem>
        <StatusItem>Degrees</StatusItem>
        <StatusItem>rad/s</StatusItem>
        <StatusItem>Celsius</StatusItem>
      </StatusBar>
      <Taskbar>
        <Weather>
          <Icon name="sun" size={7} />
          <TwoLines>
            5°C
            <br />
            Słonecznie
          </TwoLines>
        </Weather>
        <Dock>
          <DockButton aria-label="Start"><Icon name="windows" size={8} /></DockButton>
          <DockSearch>
            <Icon name="search" size={5} />
            <DockInput placeholder="Search" />
          </DockSearch>
          {dock.map((name) => (
            <DockButton key={name} aria-label={name} $active={name === "ansys"}>
              <DockMark $open={name !== "taskview" && name !== "purple"}>
                <Icon name={name} size={8} />
              </DockMark>
            </DockButton>
          ))}
        </Dock>
        <Tray>
          <Icon name="up" size={5} />
          <Icon name="cloud" size={5} />
          <Icon name="mic" size={5} />
          <TwoLines $align="center">
            ENG
            <br />
            INTL
          </TwoLines>
          <Icon name="wifi" size={5} />
          <Icon name="speaker" size={5} />
          <Icon name="battery" size={5} />
          <TwoLines $align="right">
            09:52
            <br />
            18/10/2024
          </TwoLines>
          <Icon name="bell" size={5} />
        </Tray>
      </Taskbar>
    </App>
  );
};

export default MechanicalApp;
